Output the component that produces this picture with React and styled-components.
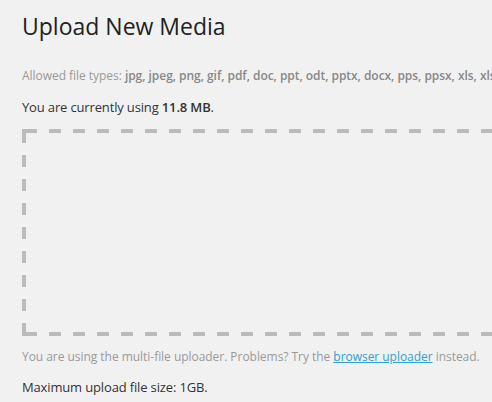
import styled, { createGlobalStyle } from "styled-components";

const GlobalStyle = createGlobalStyle`
  html, body {
    margin: 0;
    padding: 0;
    background: #f1f1f1;
    overflow: hidden;
  }
  body {
    font-family: "Open Sans", "Liberation Sans", sans-serif;
    color: #444;
  }
`;

const Page = styled.div`
  width: 620px;
  padding: 12px 0 0 22px;
`;

const Title = styled.h2`
  margin: 0;
  font-size: 23px;
  line-height: 29px;
  font-weight: 400;
  color: #222;
`;

const Line = styled.p`
  margin: ${(p) => p.$mt || 0}px 0 0;
  font-size: ${(p) => (p.$muted ? 12 : 13)}px;
  letter-spacing: ${(p) => (p.$muted ? "-0.04px" : "-0.15px")};
  line-height: 18px;
  white-space: nowrap;
  color: ${(p) => (p.$muted ? "#999" : "#333")};

  strong {
    font-weight: 600;
    color: ${(p) => (p.$muted ? "#888" : "#333")};
  }

  a {
    color: #2ea2cc;
    text-decoration: underline;
  }
`;

// dashed frame drawn with gradients so the dash length (12px) and gaps match
const DropZone = styled.div`
  margin-top: 13px;
  height: 207px;
  background-image: linear-gradient(#bbb, #bbb), linear-gradient(#bbb, #bbb),
    linear-gradient(90deg, #bbb 12px, transparent 12px),
    linear-gradient(90deg, #bbb 12px, transparent 12px),
    linear-gradient(#bbb 12px, transparent 12px);
  background-size: 4px 4px, 4px 4px, 24px 4px, 24px 4px, 4px 24px;
  background-position: 0 0, 0 100%, 3px 0, 3px 100%, 0 2px;
  background-repeat: no-repeat, no-repeat, repeat-x, repeat-x, repeat-y;
`;

const types =
  "jpg, jpeg, png, gif, pdf, doc, ppt, odt, pptx, docx, pps, ppsx, xls, xlsx, psd, mp3, m4a, ogg, wav";

export default function App() {
  return (
    <>
      <GlobalStyle />
      <Page>
        <Title>Upload New Media</Title>
        <Line $muted $mt={26}>
          Allowed file types: <strong>{types}</strong>
        </Line>
        <Line $mt={13}>
          You are currently using <strong>11.8 MB</strong>.
        </Line>
        <DropZone />
        <Line $muted $mt={12}>
          You are using the multi-file uploader. Problems? Try the{" "}
          <a href="#">browser uploader</a> instead.
        </Line>
        <Line $mt={12}>Maximum upload file size: 1GB.</Line>
      </Page>
    </>
  );
}
